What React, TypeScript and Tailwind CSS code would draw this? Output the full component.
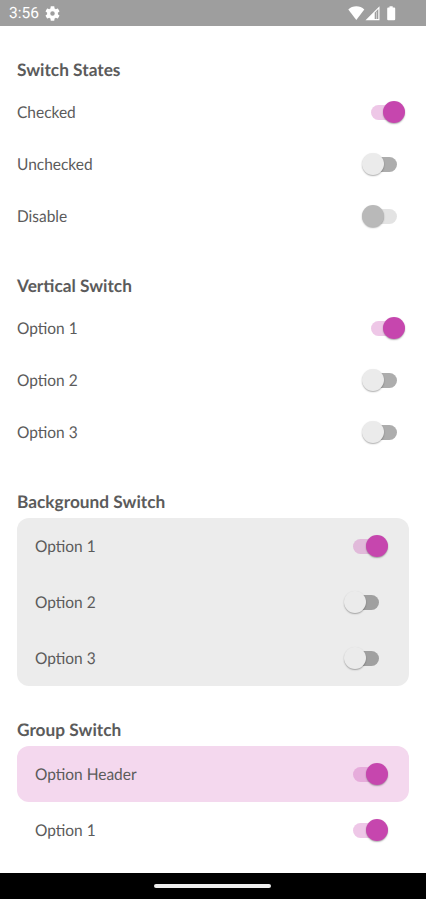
import React from 'react';
import clsx from 'clsx';

type SwitchProps = {
  checked?: boolean;
  disabled?: boolean;
};

const Switch: React.FC<SwitchProps> = ({ checked = false, disabled = false }) => (
  <button
    type="button"
    role="switch"
    aria-checked={checked}
    disabled={disabled}
    className={clsx(
      'flex h-[15px] w-[26px] shrink-0 items-center rounded-full',
      checked ? 'justify-end bg-[#c646ae]/30' : disabled ? 'bg-black/11' : 'bg-black/32'
    )}
  >
    <span
      className={clsx(
        'h-[22px] w-[22px] shrink-0 rounded-full shadow-[0_1px_1.5px_rgba(0,0,0,0.32)]',
        checked ? '-mr-[8.5px] bg-[#c646ae]' : '-ml-[8.7px]',
        !checked && (disabled ? 'bg-[#b9b9b9]' : 'bg-[#ebebeb]')
      )}
    />
  </button>
);

type RowProps = SwitchProps & {
  label: string;
  inset?: boolean;
};

const SwitchRow: React.FC<RowProps> = ({ label, inset, ...rest }) => (
  <div
    className={clsx(
      'flex items-center justify-between',
      inset ? 'h-14 pr-[30px] pl-[17.5px]' : 'h-[52px] pr-[12.5px]'
    )}
  >
    <span className="origin-left scale-x-[0.95] pt-[2px]">{label}</span>
    <Switch {...rest} />
  </div>
);

const Title: React.FC<{ children: React.ReactNode }> = ({ children }) => (
  <h2 className="flex h-[34px] items-center pt-px text-[17.3px] font-bold">{children}</h2>
);

const StatusBar = () => (
  <header className="flex h-[26px] shrink-0 items-center bg-[#9e9e9e] pr-[29px] pl-[9px] text-white">
    <span className="pt-[2px] font-[Roboto,sans-serif] text-[15.5px]">3:56</span>
    <svg className="ml-[6px] h-[15px] w-[15px]" viewBox="2 2 20 20" fill="currentColor">
      <path d="M19.14 12.94c.04-.3.06-.61.06-.94 0-.32-.02-.64-.07-.94l2.03-1.58c.18-.14.23-.41.12-.61l-1.92-3.32c-.12-.22-.37-.29-.59-.22l-2.39.96c-.5-.38-1.03-.7-1.62-.94l-.36-2.54c-.04-.24-.24-.41-.48-.41h-3.84c-.24 0-.43.17-.47.41l-.36 2.54c-.59.24-1.13.57-1.62.94l-2.39-.96c-.22-.08-.47 0-.59.22L2.74 8.87c-.12.21-.08.47.12.61l2.03 1.58c-.05.3-.09.63-.09.94s.02.64.07.94l-2.03 1.58c-.18.14-.23.41-.12.61l1.92 3.32c.12.22.37.29.59.22l2.39-.96c.5.38 1.03.7 1.62.94l.36 2.54c.05.24.24.41.48.41h3.84c.24 0 .44-.17.47-.41l.36-2.54c.59-.24 1.13-.56 1.62-.94l2.39.96c.22.08.47 0 .59-.22l1.92-3.32c.12-.22.07-.47-.12-.61l-2.01-1.58zM12 15a3 3 0 1 1 0-6 3 3 0 0 1 0 6z" />
    </svg>
    <svg className="ml-auto h-[15px] w-[49px]" viewBox="0 0 49 15" fill="currentColor">
      <path d="M8.3 14 .3 3.5C2.5 1.4 5.2.3 8.3.3s5.8 1.1 8 3.2z" />
      <path d="M31.5.3v14h-14z" />
      <path d="M26.7 6.7 30.3 3.1V13h-3.6z" fill="#9e9e9e" />
      <path d="M28.2 5.8h.8V13h-.8z" fillOpacity="0.6" />
      <path d="M41.5.3h3.2v1.2h1.500q1 0 1 1V13.300q0 1-1 1h-6q-1 0-1-1V2.500q0-1 1-1h1.300z" />
    </svg>
  </header>
);

export default function App() {
  return (
    <div className="flex h-[899px] w-[426px] flex-col overflow-hidden bg-white font-[Lato,sans-serif] text-[16.3px] text-[#5b5b5b] [text-rendering:geometricPrecision]">
      <StatusBar />
      <main className="flex-1 overflow-hidden px-[17px] pt-[26px]">
        <section className="mb-[26px]">
          <Title>Switch States</Title>
          <SwitchRow label="Checked" checked />
          <SwitchRow label="Unchecked" />
          <SwitchRow label="Disable" disabled />
        </section>
        <section className="mb-[26px]">
          <Title>Vertical Switch</Title>
          <SwitchRow label="Option 1" checked />
          <SwitchRow label="Option 2" />
          <SwitchRow label="Option 3" />
        </section>
        <section className="mb-[26px]">
          <Title>Background Switch</Title>
          <div className="rounded-xl bg-[#ececec]">
            <SwitchRow label="Option 1" checked inset />
            <SwitchRow label="Option 2" inset />
            <SwitchRow label="Option 3" inset />
          </div>
        </section>
        <section>
          <Title>Group Switch</Title>
          <div className="rounded-xl bg-[#f4d8ee]">
            <SwitchRow label="Option Header" checked inset />
          </div>
          <SwitchRow label="Option 1" checked inset />
        </section>
      </main>
      <footer className="flex h-[26px] shrink-0 items-center justify-center bg-black pr-px">
        <div className="h-1 w-[117px] rounded-full bg-[#eeeeee]" />
      </footer>
    </div>
  );
}
